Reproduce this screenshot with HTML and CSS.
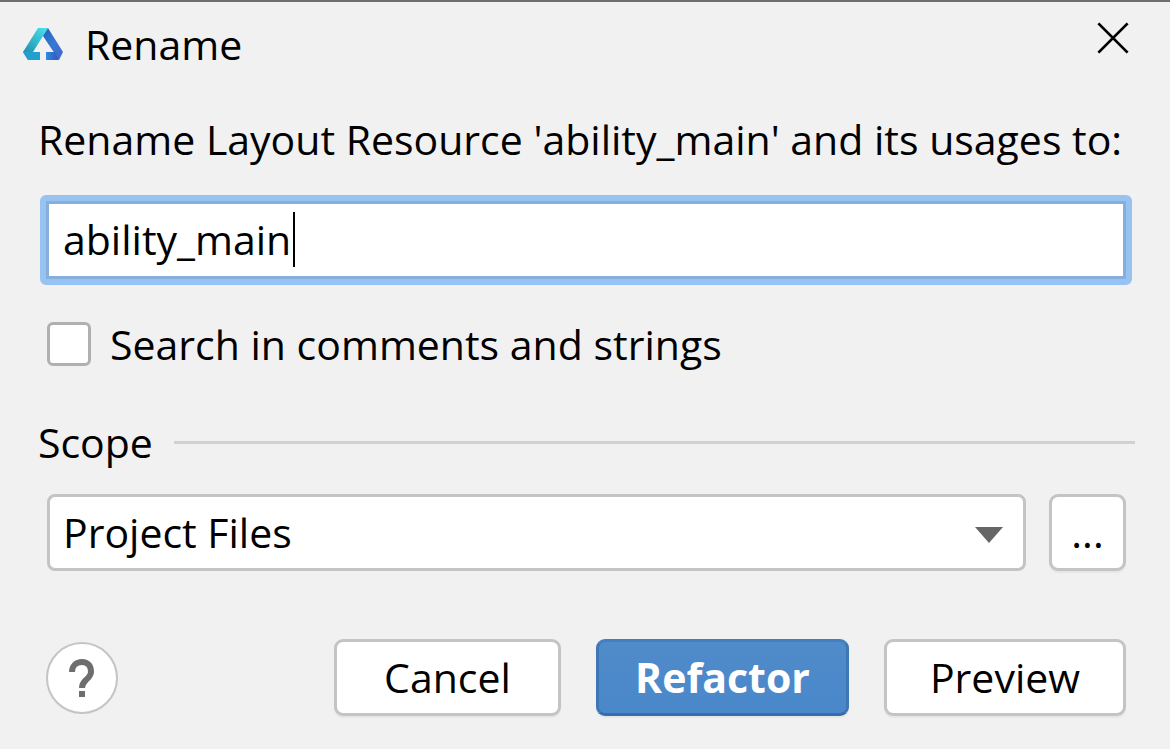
FILE: index.html
```html
<!DOCTYPE html>
<html lang="en">
<head>
    <meta charset="UTF-8">
    <title>Rename</title>
    <link rel="stylesheet" href="styles.css">
</head>
<body>
    <form class="dialog">
        <header class="titlebar">
            <svg class="logo" viewBox="0 0 40 32" aria-hidden="true">
                <defs>
                    <linearGradient id="leftSide" x1="0.8" y1="0" x2="0.2" y2="1">
                        <stop offset="0" stop-color="#46dde6"/>
                        <stop offset="1" stop-color="#1d86a8"/>
                    </linearGradient>
                    <linearGradient id="rightSide" x1="0" y1="0" x2="1" y2="1">
                        <stop offset="0" stop-color="#2261b8"/>
                        <stop offset="0.5" stop-color="#3878d4"/>
                        <stop offset="1" stop-color="#4066cc"/>
                    </linearGradient>
                    <linearGradient id="rightFoot" x1="0" y1="0" x2="1" y2="0">
                        <stop offset="0" stop-color="#2f8be0"/>
                        <stop offset="1" stop-color="#3355b4"/>
                    </linearGradient>
                </defs>
                <path fill="url(#leftSide)" d="M15 0h10L5 32 0 24z"/>
                <path fill="#21a0d0" d="M0 24h17v8H5z"/>
                <path fill="url(#rightSide)" d="M25 0l15 24-4 8-16-24z"/>
                <path fill="url(#rightFoot)" d="M23 24h9l4 8H23z"/>
            </svg>
            <h1>Rename</h1>
            <button type="button" class="close" aria-label="Close">
                <svg viewBox="0 0 32 32" aria-hidden="true">
                    <path d="M3 3l26 26M29 3L3 29"/>
                </svg>
            </button>
        </header>

        <label class="prompt" for="newName">Rename Layout Resource 'ability_main' and its usages to:</label>
        <div class="field">
            <input type="text" id="newName" value="ability_main">
            <span class="caret"></span>
        </div>

        <div class="option">
            <input type="checkbox" id="searchComments">
            <label for="searchComments">Search in comments and strings</label>
        </div>

        <div class="scope-title">
            <label for="scope">Scope</label>
            <span class="line"></span>
        </div>
        <div class="scope-row">
            <div class="select">
                <select id="scope">
                    <option>Project Files</option>
                </select>
                <svg class="arrow" viewBox="0 0 28 16" aria-hidden="true"><path d="M0 0h28L14 16z"/></svg>
            </div>
            <button type="button" class="btn more">...</button>
        </div>

        <footer class="actions">
            <button type="button" class="help" aria-label="Help">
                <svg viewBox="0 0 26 38" aria-hidden="true">
                    <path class="hook" d="M3 13C3 7 7 3 13 3s9 4 9 10c0 3-2 5-4 7-3 3-5 4-5 9"/>
                    <path class="dot" d="M10 32h6v6h-6z"/>
                </svg>
            </button>
            <button type="button" class="btn cancel">Cancel</button>
            <button type="submit" class="btn primary">Refactor</button>
            <button type="button" class="btn preview">Preview</button>
        </footer>
    </form>
</body>
</html>
```
FILE: styles.css
```css
* {box-sizing: border-box}
body {
    margin: 0;
    background-color: #f1f1f1;
    color: #000;
    font-family: "Open Sans", "Noto Sans", sans-serif;
    font-size: 41px;
    line-height: 56px;
}
input, select, button {
    font: inherit;
    color: inherit;
    margin: 0;
}
.dialog {
    border-top: 2px solid #706e6e;
    padding: 0 35px 32px 38px;
}

/* Title bar */
.titlebar {
    display: flex;
    align-items: center;
    height: 84px;
    margin-left: -15px;
}
.logo {
    width: 40px;
    height: 32px;
}
h1 {
    margin: 0 0 0 22px;
    font-size: inherit;
    font-weight: normal;
}
.close {
    margin: 0 4px 12px auto;
    padding: 0;
    width: 36px;
    height: 36px;
    border: none;
    background: none;
}
.close svg {
    display: block;
    width: 36px;
    height: 36px;
    fill: none;
    stroke: #000;
    stroke-width: 2.5;
}

/* New name */
.prompt {
    display: block;
    margin-top: 25px;
    white-space: nowrap;
}
.field {
    position: relative;
    margin: 28px 3px 0 2px;
}
.field input {
    display: block;
    width: 100%;
    height: 90px;
    padding: 0 17px 2px;
    border: 6px solid #97c3f3;
    border-radius: 6px;
    outline: none;
    background-color: #fff;
    box-shadow: inset 0 0 0 3px #87afdc;
}
.caret {
    position: absolute;
    left: 253px;
    top: 17px;
    width: 2px;
    height: 55px;
    background-color: #000;
}

.option {
    display: flex;
    align-items: center;
    gap: 19px;
    margin: 31px 0 0 9px;
}
.option input {
    appearance: none;
    width: 44px;
    height: 44px;
    border: 3px solid #b0b0b0;
    border-radius: 6px;
    background-color: #fff;
}

/* Scope */
.scope-title {
    display: flex;
    align-items: center;
    gap: 21px;
    margin-top: 42px;
}
.line {
    flex: 1;
    height: 3px;
    background-color: #d1d1d1;
}
.scope-row {
    display: flex;
    gap: 23px;
    margin: 24px 9px 0 9px;
}
.select {
    position: relative;
    flex: 1;
}
.select select {
    appearance: none;
    display: block;
    width: 100%;
    height: 77px;
    padding: 0 60px 2px 13px;
    border: 3px solid #c4c4c4;
    border-radius: 8px;
    background-color: #fff;
}
.arrow {
    position: absolute;
    right: 23px;
    top: 33px;
    width: 28px;
    height: 16px;
    fill: #666;
    pointer-events: none;
}

/* Buttons */
.btn {
    height: 77px;
    padding: 0 0 2px;
    border: 3px solid #c4c4c4;
    border-radius: 9px;
    background-color: #fff;
    box-shadow: 0 2px 1px #e6e6e6;
}
.more {
    width: 77px;
}
.actions {
    display: flex;
    align-items: center;
    margin: 68px 9px 0 8px;
}
.help {
    display: flex;
    align-items: center;
    justify-content: center;
    width: 72px;
    height: 72px;
    margin-right: auto;
    padding: 0;
    border: 2px solid #c4c4c4;
    border-radius: 50%;
    background-color: #fff;
}
.help svg {
    width: 26px;
    height: 38px;
}
.hook {
    fill: none;
    stroke: #6e6e6e;
    stroke-width: 6;
}
.dot {
    fill: #6e6e6e;
}
.cancel {
    width: 227px;
}
.primary {
    width: 253px;
    margin: 0 35px;
    border-color: #457ebc #3f77b5 #356eae;
    background: linear-gradient(#508bc9, #4a88cb);
    color: #fff;
    font-weight: bold;
}
.preview {
    width: 242px;
}
```
